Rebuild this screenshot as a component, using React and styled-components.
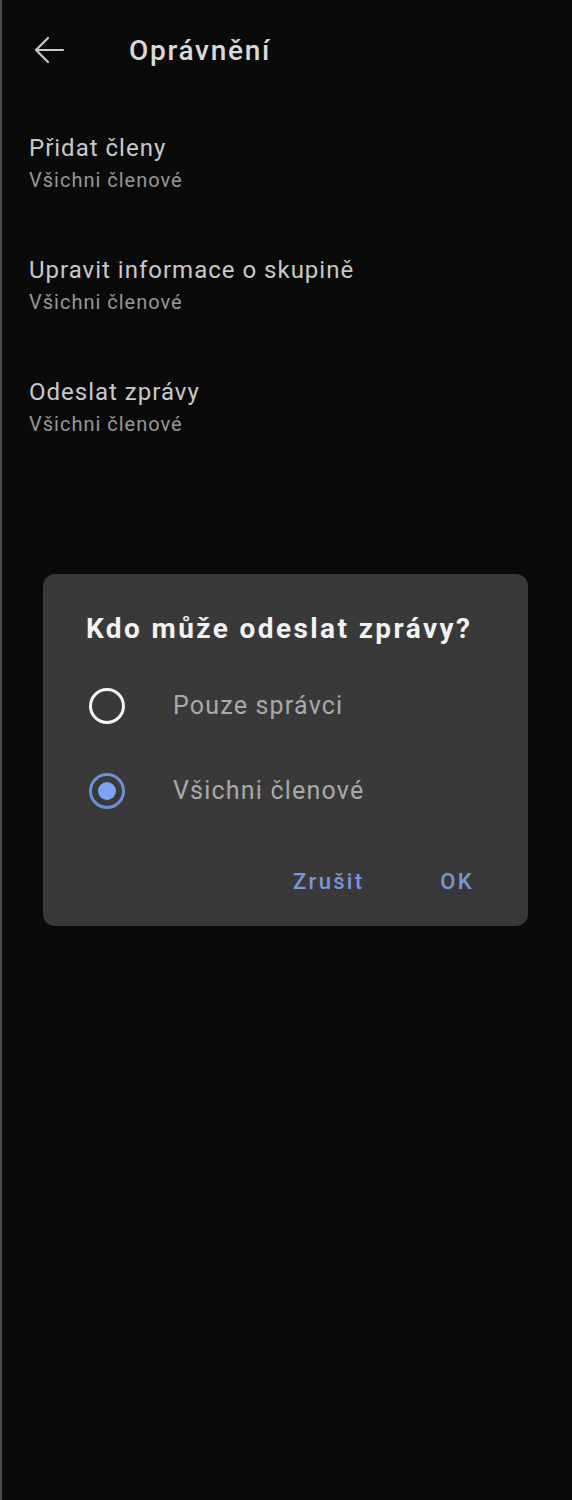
import React, { useState } from "react";
import styled, { createGlobalStyle } from "styled-components";

const Global = createGlobalStyle`
  html, body {
    margin: 0;
    padding: 0;
    background: #0b0a0b;
  }
  body {
    font-family: Roboto, "Noto Sans", sans-serif;
  }
`;

const items = [
  { title: "Přidat členy", value: "Všichni členové" },
  { title: "Upravit informace o skupině", value: "Všichni členové" },
  { title: "Odeslat zprávy", value: "Všichni členové" },
];

const options = ["Pouze správci", "Všichni členové"];

function App() {
  const [choice, setChoice] = useState(1);

  return (
    <Screen>
      <Global />
      <Header>
        <BackButton aria-label="Zpět">
          <svg width="32" height="32" viewBox="0 0 32 32" fill="none">
            <path
              d="M30 16H3M15 4L3 16l12 12"
              stroke="#c9c9c9"
              strokeWidth="2.2"
              strokeLinecap="round"
              strokeLinejoin="round"
            />
          </svg>
        </BackButton>
        <Title>Oprávnění</Title>
      </Header>

      <List>
        {items.map((it) => (
          <Item key={it.title}>
            <ItemTitle>{it.title}</ItemTitle>
            <ItemValue>{it.value}</ItemValue>
          </Item>
        ))}
      </List>

      <Dialog>
        <DialogTitle>Kdo může odeslat zprávy?</DialogTitle>
        <Options>
          {options.map((o, i) => (
            <Option key={o} onClick={() => setChoice(i)}>
              <Radio $checked={choice === i} />
              <OptionLabel>{o}</OptionLabel>
            </Option>
          ))}
        </Options>
        <Actions>
          <ActionButton>Zrušit</ActionButton>
          <ActionButton>OK</ActionButton>
        </Actions>
      </Dialog>
    </Screen>
  );
}

export default App;

const Screen = styled.div`
  width: 572px;
  min-height: 1500px;
  box-sizing: border-box;
  background: #0b0a0b;
  border-left: 2px solid #4a4a4a;
  display: flex;
  flex-direction: column;
`;

const Header = styled.div`
  height: 100px;
  display: flex;
  align-items: center;
  padding-left: 31px;
  gap: 64px;
`;

const BackButton = styled.button`
  background: none;
  border: 0;
  padding: 0;
  width: 32px;
  height: 32px;
  display: flex;
`;

const Title = styled.h1`
  margin: 2px 0 0;
  font-size: 28px;
  line-height: 34px;
  font-weight: 500;
  letter-spacing: 1.7px;
  color: #d9d9d9;
`;

const List = styled.div`
  display: flex;
  flex-direction: column;
  padding-top: 33px;
  gap: 63px;
`;

const Item = styled.div`
  padding-left: 27px;
  display: flex;
  flex-direction: column;
  gap: 5px;
`;

const ItemTitle = styled.div`
  font-size: 24px;
  line-height: 30px;
  letter-spacing: 1px;
  color: #c9c9c9;
`;

const ItemValue = styled.div`
  font-size: 20px;
  line-height: 24px;
  letter-spacing: 1px;
  color: #979797;
`;

const Dialog = styled.div`
  margin: 138px 0 0 41px;
  width: 485px;
  height: 352px;
  box-sizing: border-box;
  background: #3a393a;
  border-radius: 12px;
  padding: 38px 0 0 43px;
  display: flex;
  flex-direction: column;
`;

const DialogTitle = styled.h2`
  margin: 0;
  font-size: 28px;
  line-height: 34px;
  font-weight: 700;
  letter-spacing: 2.4px;
  color: #f2f2f2;
`;

const Options = styled.div`
  display: flex;
  flex-direction: column;
  margin-top: 42px;
  gap: 49px;
`;

const Option = styled.div`
  display: flex;
  align-items: center;
  gap: 48px;
  height: 36px;
  cursor: pointer;
`;

const Radio = styled.span`
  width: 36px;
  height: 36px;
  box-sizing: border-box;
  border-radius: 50%;
  flex: none;
  border: 3px solid ${(p) => (p.$checked ? "#6e8ed8" : "#f4f4f4")};
  display: flex;
  align-items: center;
  justify-content: center;
  margin-left: 3px;
  &::after {
    content: "";
    width: 18px;
    height: 18px;
    border-radius: 50%;
    background: #7fa2f7;
    display: ${(p) => (p.$checked ? "block" : "none")};
  }
`;

const OptionLabel = styled.span`
  font-size: 25px;
  line-height: 30px;
  color: #a9a9a9;
  letter-spacing: 1.2px;
`;

const Actions = styled.div`
  display: flex;
  justify-content: flex-end;
  gap: 76px;
  margin-top: 60px;
  padding-right: 54px;
`;

const ActionButton = styled.button`
  background: none;
  border: 0;
  padding: 0;
  font-family: Roboto, sans-serif;
  font-size: 22px;
  line-height: 26px;
  font-weight: 500;
  letter-spacing: 2.3px;
  color: #7896da;
`;
